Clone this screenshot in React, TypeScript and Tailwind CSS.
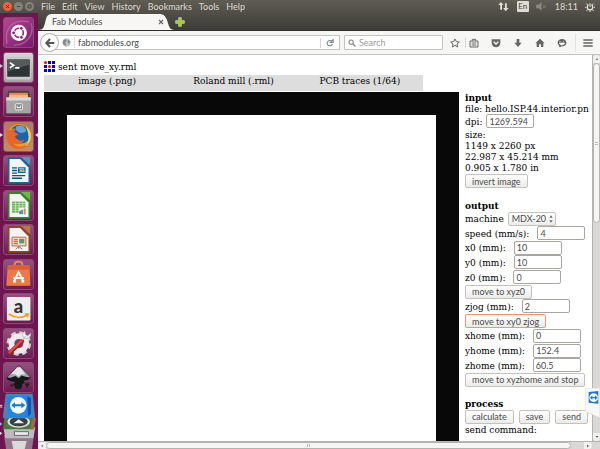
import type { ReactNode } from "react";

const MENUS = ["File", "Edit", "View", "History", "Bookmarks", "Tools", "Help"];

const FORMATS = ["image (.png)", "Roland mill (.rml)", "PCB traces (1/64)"];

const btn =
  "h-[14px] rounded-[2px] border border-[#c4c1bd] bg-linear-to-b from-white to-[#ebebea] px-[6px] font-['Lato',sans-serif] text-[9px] leading-[11px] text-[#4c4c4c] whitespace-nowrap";

function Tile({ name, bg, children }: { name: string; bg?: string; children: ReactNode }) {
  return (
    <button
      aria-label={name}
      className={`h-[31px] w-[31px] shrink-0 rounded-[3px] border border-[#8d4a79] ${bg ?? "bg-linear-to-b from-[#92527d] to-[#6d1a51]"}`}
    >
      <svg viewBox="0 0 90 90" className="h-full w-full">{children}</svg>
    </button>
  );
}

function Doc({ color, fold, children }: { color: string; fold: string; children: ReactNode }) {
  return (
    <>
      <path d="M12 4H54L81 32V86H12Z" fill={color} />
      <path d="M17 9H50L76 36V81H17Z" fill="#f4f4f4" />
      <path d="M53 3H81V29Z" fill={fold} />
      {children}
    </>
  );
}

function Launcher() {
  return (
    <nav className="flex w-[38px] shrink-0 flex-col items-center overflow-hidden bg-[#6f144f] pt-[4px] pr-px">
      <div className="relative flex h-[376px] shrink-0 flex-col justify-between">
        <Tile name="Dash" bg="bg-linear-to-br from-[#b04a8e] to-[#7d1770]">
          <path d="M10 80C-2 30 30 2 78 12M84 16C96 50 70 86 30 84" stroke="#c77db4" strokeWidth="4" fill="none" opacity=".6" />
          <circle cx="46" cy="46" r="25" fill="#fff" />
          <circle cx="46" cy="46" r="14" stroke="#8b2570" strokeWidth="5" fill="none" />
          <path d="M46 46L31 46M46 46L55 31M46 46L55 61" stroke="#fff" strokeWidth="3" />
          <g fill="#8b2570" stroke="#fff" strokeWidth="3">
            <circle cx="30" cy="46" r="6" />
            <circle cx="54" cy="32" r="6" />
            <circle cx="54" cy="60" r="6" />
          </g>
        </Tile>
        <Tile name="Terminal" bg="bg-linear-to-b from-[#d8d5d6] to-[#a99fa6]">
          <rect x="6" y="12" width="78" height="70" rx="5" fill="#c9c9c9" />
          <rect x="10" y="20" width="70" height="54" rx="2" fill="#2e3436" />
          <path d="M10 20H80V36L10 58Z" fill="#555a5b" />
          <path d="M18 30L30 38L18 46M35 46H48" stroke="#fff" strokeWidth="5" fill="none" />
        </Tile>
        <Tile name="Files">
          <path d="M14 12H76L82 36H8Z" fill="#4a403c" />
          <path d="M16 18H74V38H16Z" fill="#e88c50" />
          <path d="M16 25H74V38H16Z" fill="#f3bb91" />
          <path d="M7 32H83V82H7Z" fill="#a5a5a3" />
          <path d="M7 32H83V42H7Z" fill="#d8d8d6" />
          <rect x="35" y="52" width="22" height="19" rx="3" fill="#858583" stroke="#eee" strokeWidth="3" />
          <path d="M41 58V64H51V58" stroke="#fff" strokeWidth="3" fill="none" />
        </Tile>
        <Tile name="Firefox" bg="bg-linear-to-b from-[#b4795c] to-[#c18f62]">
          <circle cx="47" cy="44" r="37" fill="#f39a24" />
          <path d="M23 24C34 0 79 6 80 43C80 58 67 68 49 67C30 65 22 48 23 24Z" fill="#1e62a8" />
          <path d="M37 15C50 6 67 13 69 28C58 38 44 34 37 24Z" fill="#5ba9dc" />
          <path d="M9 20C13 25 18 27 24 22C27 20 34 20 37 22L31 31L46 39L34 44C42 57 53 62 63 54C57 70 39 72 29 65C38 82 68 81 80 60C76 88 22 94 10 58C6 42 8 30 9 20Z" fill="#e7652b" />
          <path d="M67 13C88 24 90 60 66 77C80 57 79 39 67 13Z" fill="#ffd449" />
        </Tile>
        <Tile name="Writer">
          <Doc color="#1b6390" fold="#5796bf">
            <path d="M25 37H40M25 45H40M25 53H40M25 61H66M25 69H56" stroke="#12537e" strokeWidth="4" />
            <rect x="43" y="35" width="24" height="18" fill="#176294" />
            <path d="M46 49L53 42L58 46L62 42L65 50Z" fill="#e9bd51" />
            <rect x="46" y="38" width="17" height="4" fill="#a0ceea" />
          </Doc>
        </Tile>
        <Tile name="Calc">
          <Doc color="#298b19" fold="#63bd43">
            <rect x="25" y="33" width="41" height="34" fill="#64ad4a" />
            <path d="M25 39H66M25 46H66M25 53H66M25 60H66M36 33V67M47 33V67M58 33V67" stroke="#e6f5df" strokeWidth="2" />
            <rect x="46" y="52" width="24" height="23" fill="#fff" />
            <path d="M50 72V61M56 72V58" stroke="#3279b6" strokeWidth="5" />
            <path d="M64 73V54" stroke="#e7833c" strokeWidth="6" />
          </Doc>
        </Tile>
        <Tile name="Impress">
          <Doc color="#8c451f" fold="#b77645">
            <path d="M25 38H68V65H25Z" fill="#fae1cb" stroke="#b86239" strokeWidth="3" />
            <path d="M30 46H43M30 52H43M30 58H43" stroke="#a84c24" strokeWidth="3" />
            <rect x="47" y="43" width="16" height="14" fill="#5c9774" />
            <path d="M46 66V74M36 75L46 67L57 75" stroke="#777" strokeWidth="3" fill="none" />
          </Doc>
        </Tile>
        <Tile name="Software">
          <path d="M33 24V15Q33 5 45 5Q57 5 57 15V24" stroke="#e98d67" strokeWidth="6" fill="none" />
          <path d="M12 16H79L82 80H7Z" fill="#ed794b" />
          <path d="M12 16H79L80 30H11Z" fill="#db5e32" />
          <path d="M32 65L45 37L59 65M29 56H62M28 67H37M54 67H63" stroke="#fff" strokeWidth="6" fill="none" />
        </Tile>
        <Tile name="Amazon">
          <rect x="9" y="9" width="73" height="73" rx="3" fill="#ededed" />
          <text x="45" y="58" textAnchor="middle" fontFamily="Lato" fontWeight="900" fontSize="57" fill="#333">a</text>
          <path d="M15 62Q44 82 72 65M65 62L75 62L73 72" stroke="#f49b23" strokeWidth="5" fill="none" />
        </Tile>
        <Tile name="Settings">
          <circle cx="46" cy="45" r="33" stroke="#d4d2d3" strokeWidth="10" strokeDasharray="15 11" fill="none" />
          <circle cx="46" cy="45" r="23" stroke="#ececec" strokeWidth="18" fill="none" />
          <path d="M56 38L18 74" stroke="#a32320" strokeWidth="13" strokeLinecap="round" />
          <path d="M54 37L17 72" stroke="#e14c43" strokeWidth="7" strokeLinecap="round" />
          <path d="M56 34L68 22M65 8C53 12 57 31 70 30C79 29 84 21 82 14L73 22L66 17Z" fill="#f7f7f7" stroke="#bcbcbc" strokeWidth="3" />
        </Tile>
        <Tile name="Inkscape">
          <path d="M8 46L40 11Q46 5 52 11L84 46Q75 56 60 54L65 62Q52 65 57 71Q51 85 43 81Q29 79 34 71Q21 68 36 60L17 55Q8 52 8 46Z" fill="#161616" />
          <path d="M10 45L41 12Q46 8 51 12L82 45L66 43L55 39L46 47L35 40L21 46Z" fill="#9da3aa" />
          <path d="M41 14L22 34L35 35L45 43L53 35L66 36L51 14Z" fill="#e4e6e8" />
          <path d="M20 70H27M66 66H79M69 73H75" stroke="#1b1b1b" strokeWidth="6" />
        </Tile>
        <span className="absolute top-[47px] -left-[3px] border-y-2 border-l-3 border-y-transparent border-l-[#d9c5d1]" />
        <span className="absolute top-[116px] -left-[3px] border-y-2 border-l-3 border-y-transparent border-l-[#ead8e2]" />
        <span className="absolute top-[116px] -right-[4px] border-y-2 border-r-3 border-y-transparent border-r-[#ead8e2]" />
      </div>
      <svg viewBox="0 0 114 168" className="h-[56px] w-[38px] shrink-0" aria-label="Folded applications">
        <path d="M12 127H102L96 168H18Z" fill="#93758a" />
        <path d="M35 144H80L74 168H40Z" fill="#d9dada" />
        <path d="M10 103H106L100 136H16Z" fill="#bdbcbd" />
        <rect x="43" y="116" width="42" height="11" fill="#eee" stroke="#686868" strokeWidth="3" />
        <path d="M13 75H108L101 109H9Z" fill="#497a43" />
        <path d="M97 75H108L101 109H92Z" fill="#9e6b3f" />
        <ellipse cx="56" cy="86" rx="34" ry="18" fill="#ddd" />
        <ellipse cx="56" cy="86" rx="27" ry="14" fill="#383e39" />
        <path d="M40 91L56 79L73 91Z" fill="#eee" />
        <path d="M17 2H98L105 72Q105 76 100 76H13Q8 76 9 70Z" fill="#4b83b7" />
        <path d="M22 9H82L93 62L84 72H25Z" fill="#1f86e4" />
        <path d="M82 9L93 16V62L84 72Z" fill="#0b58b4" />
        <circle cx="55" cy="37" r="25" fill="#f4f8fc" />
        <path d="M34 37L45 28V34H64V28L76 37L64 46V40H45V46Z" fill="#1976d2" />
        <path d="M0 37H7M0 42H7" stroke="#e5d3de" strokeWidth="3" />
        <path d="M0 88L7 93L0 98Z" fill="#8cbce3" />
        <path d="M0 116L7 121L0 126Z" fill="#ddd" />
      </svg>
    </nav>
  );
}

function TopBar() {
  return (
    <header className="flex h-[13px] shrink-0 items-center bg-linear-to-b from-[#605d54] to-[#504e47] text-[9px] leading-[13px] text-[#dfdbd2]">
      <div className="flex w-[41px] shrink-0 items-center gap-[2px] pl-[3px]">
        <button aria-label="Close" className="flex size-[9px] items-center justify-center rounded-full bg-[#ef6238]">
          <svg viewBox="0 0 9 9" className="size-[9px]"><path d="M3 3L6 6M6 3L3 6" stroke="#643221" /></svg>
        </button>
        <button aria-label="Minimize" className="flex size-[9px] items-center justify-center rounded-full bg-[#85827a]">
          <svg viewBox="0 0 9 9" className="size-[9px]"><path d="M3 4.5H6" stroke="#45433d" /></svg>
        </button>
        <button aria-label="Maximize" className="flex size-[9px] items-center justify-center rounded-full bg-[#85827a]">
          <svg viewBox="0 0 9 9" className="size-[9px]"><path d="M3 3H6V6H3Z" stroke="#45433d" fill="none" /></svg>
        </button>
      </div>
      <div className="flex flex-1 gap-[7px]">
        {MENUS.map((m) => <button key={m}>{m}</button>)}
      </div>
      <div className="flex items-center gap-[7px] pr-[5px]">
        <svg viewBox="0 0 30 30" className="mr-px size-[11px]" fill="#e4e0d7">
          <path d="M8 3L15 11H11V24H6V11H1Z" />
          <path d="M19 6H24V19H29L21 28L14 19H19Z" />
        </svg>
        <span className="flex h-[11px] w-[12px] items-center justify-center rounded-[1px] bg-[#dfdbd2] text-[8px] text-[#45433d]">En</span>
        <svg viewBox="0 0 30 24" className="h-[9px] w-[11px]">
          <path d="M1 8H7L14 2V22L7 16H1ZM19 8L27 17M27 8L19 17" fill="#8b887f" stroke="#8b887f" strokeWidth="2" />
        </svg>
        <span className="ml-px">18:11</span>
        <svg viewBox="0 0 30 30" className="size-[10px]" stroke="#e4e0d7" fill="none">
          <circle cx="15" cy="16" r="8" strokeWidth="4" />
          <path d="M15 1V15" stroke="#57544c" strokeWidth="8" />
          <path d="M15 3V15M4 5L8 9M26 5L22 9M0 16H4M26 16H30M4 27L8 23M26 27L22 23M15 26V30" strokeWidth="3" />
        </svg>
      </div>
    </header>
  );
}

function TabStrip() {
  return (
    <div className="flex h-[18px] shrink-0 items-end border-b border-[#2d2c28] bg-linear-to-b from-[#504e47] to-[#3c3b37]">
      <div className="relative flex h-[17px] w-[137px] items-center">
        <svg viewBox="0 0 137 17" className="absolute inset-0 h-full w-full">
          <path d="M0 17C7 17 6 12 8 6C9 2 11 1 15 1H121C126 1 127 3 129 7C131 13 131 17 137 17Z" fill="#f7f6f5" />
        </svg>
        <span className="relative flex-1 pt-px pl-[14px] text-[9px] text-[#4c4c4c]">Fab Modules</span>
        <button aria-label="Close tab" className="relative mr-[11px]">
          <svg viewBox="0 0 6 6" className="size-[6px]"><path d="M1 1L5 5M5 1L1 5" stroke="#666" strokeWidth="1.2" /></svg>
        </button>
      </div>
      <button aria-label="New tab" className="mb-[3px]">
        <svg viewBox="0 0 30 30" className="size-[10px]"><path d="M11 2H19V11H28V19H19V28H11V19H2V11H11Z" fill="#a2c93a" stroke="#d6e8a6" strokeWidth="2" /></svg>
      </button>
    </div>
  );
}

function ToolIcon({ name, children }: { name: string; children: ReactNode }) {
  return (
    <button aria-label={name} className="shrink-0">
      <svg viewBox="0 0 30 30" className="size-[10px]" fill="#666" stroke="#666">{children}</svg>
    </button>
  );
}

function Toolbar() {
  return (
    <div className="flex h-[24px] shrink-0 items-center border-b border-[#c6c4c0] bg-[#f6f6f5] pr-[7px] pl-[2px] text-[9px]">
      <button aria-label="Back" className="z-10 -mr-[6px] flex size-[19px] shrink-0 items-center justify-center rounded-full border border-[#b0afad] bg-[#fafafa]">
        <svg viewBox="0 0 30 30" className="size-[10px]"><path d="M15 3L4 15L15 27M5 15H28" stroke="#555" strokeWidth="6" fill="none" /></svg>
      </button>
      <div className="flex h-[15px] min-w-0 flex-1 items-center border border-[#c4c3c1] bg-white pl-[8px]">
        <svg viewBox="0 0 30 30" className="mr-[3px] size-[9px] shrink-0">
          <circle cx="15" cy="15" r="14" fill="#c0c2c4" />
          <path d="M4 8L13 3L16 9L10 15L14 21L10 26L3 18ZM20 5L27 11L25 20L19 17Z" fill="#83878b" />
        </svg>
        <input aria-label="Address" defaultValue="fabmodules.org" className="h-[11px] min-w-0 flex-1 border-l border-[#dededd] pl-[3px] text-[9px] text-[#4a4a4a] outline-none" />
        <button aria-label="Reload" className="flex h-[10px] w-[19px] items-center justify-center border-l border-[#d5d5d4]">
          <svg viewBox="0 0 30 30" className="size-[8px]"><path d="M24 18A10 10 0 1 1 21 8M27 2V13H16Z" stroke="#78838e" strokeWidth="4" fill="none" /></svg>
        </button>
      </div>
      <div className="ml-[4px] flex h-[15px] w-[99px] shrink-0 items-center gap-[3px] rounded-[1px] border border-[#c4c3c1] bg-white pl-[3px]">
        <svg viewBox="0 0 30 30" className="size-[8px] shrink-0"><circle cx="12" cy="12" r="8" stroke="#888" strokeWidth="4" fill="none" /><path d="M18 18L28 28" stroke="#888" strokeWidth="5" /></svg>
        <input aria-label="Search" placeholder="Search" className="min-w-0 flex-1 outline-none placeholder:text-[#999]" />
      </div>
      <div className="flex items-center px-[5px] pl-[7px]">
        <ToolIcon name="Bookmark">
          <path d="M15 3L19 11L28 12L21 18L23 27L15 22L7 27L9 18L2 12L11 11Z" fill="none" strokeWidth="3" />
        </ToolIcon>
      </div>
      <div className="flex items-center gap-[12px] border-l border-[#d5d5d4] pr-[8px] pl-[3px]">
        <ToolIcon name="Library">
          <path d="M3 9H27V27H3Z" fill="none" strokeWidth="3" />
          <path d="M10 8V4H20V8M8 15H22M8 21H22" fill="none" strokeWidth="3" />
        </ToolIcon>
        <ToolIcon name="Pocket">
          <path d="M2 4H28V15C28 32 2 32 2 15Z" stroke="none" />
          <path d="M8 11L15 18L22 11" fill="none" stroke="#f6f6f5" strokeWidth="4" />
        </ToolIcon>
        <ToolIcon name="Downloads"><path d="M11 3H19V14H26L15 27L4 14H11Z" stroke="none" /></ToolIcon>
        <ToolIcon name="Home"><path d="M15 2L29 16H25V27H18V19H12V27H5V16H1Z" stroke="none" /></ToolIcon>
        <ToolIcon name="Chat">
          <path d="M15 3C32 3 33 24 17 25L6 28L7 23C-3 17 2 3 15 3Z" stroke="none" />
          <path d="M7 15C9 23 21 23 23 15ZM9 9V12M20 9V12" fill="#f6f6f5" stroke="#f6f6f5" strokeWidth="2" />
        </ToolIcon>
      </div>
      <div className="flex h-[18px] items-center border-l border-[#e3e3e2] pl-[7px]">
        <ToolIcon name="Menu"><path d="M1 6H29M1 15H29M1 24H29" strokeWidth="4" /></ToolIcon>
      </div>
    </div>
  );
}

function Field({ id, label, value, tight }: { id: string; label: string; value: string; tight?: boolean }) {
  return (
    <div className={`flex items-center ${tight ? "gap-[4px]" : "gap-[8px]"}`}>
      <label htmlFor={id} className="whitespace-nowrap">{label}</label>
      <input
        id={id}
        defaultValue={value}
        className="h-[14px] w-[48px] shrink-0 rounded-[2px] border border-[#aaa7a3] bg-white px-[2px] font-['Lato',sans-serif] text-[9px] text-[#4c4c4c]"
      />
    </div>
  );
}

function Settings() {
  return (
    <form className="w-[127px] shrink-0 whitespace-nowrap">
      <h2 className="font-bold">input</h2>
      <p>file: hello.ISP.44.interior.pn</p>
      <div className="h-[15px]"><Field id="dpi" label="dpi:" value="1269.594" tight /></div>
      <p>size:</p>
      <p>1149 x 2260 px</p>
      <p>22.987 x 45.214 mm</p>
      <p>0.905 x 1.780 in</p>
      <button type="button" className={`${btn} mt-px`}>invert image</button>

      <h2 className="mt-[12px] font-bold">output</h2>
      <div className="flex h-[15px] items-center gap-[4px]">
        <label htmlFor="machine">machine</label>
        <div className="relative">
          <select id="machine" className="block h-[14px] w-[48px] appearance-none rounded-[2px] border border-[#c4c1bd] bg-linear-to-b from-white to-[#ebebea] pl-[3px] font-['Lato',sans-serif] text-[9px] leading-[11px] text-[#4c4c4c]">
            <option>MDX-20</option>
          </select>
          <svg viewBox="0 0 12 24" className="pointer-events-none absolute top-[3px] right-[3px] h-[8px] w-[4px]" fill="#666">
            <path d="M6 1L11 8H1ZM6 23L1 16H11Z" />
          </svg>
        </div>
      </div>
      <div className="flex h-[161px] flex-col items-start justify-between">
        <Field id="speed" label="speed (mm/s):" value="4" />
        <Field id="x0" label="x0 (mm):" value="10" />
        <Field id="y0" label="y0 (mm):" value="10" />
        <Field id="z0" label="z0 (mm):" value="0" />
        <button type="button" className={btn}>move to xyz0</button>
        <Field id="zjog" label="zjog (mm):" value="2" />
        <button type="button" className={`${btn} border-[#ec9473]`}>move to xy0 zjog</button>
        <Field id="xhome" label="xhome (mm):" value="0" />
        <Field id="yhome" label="yhome (mm):" value="152.4" />
        <Field id="zhome" label="zhome (mm):" value="60.5" />
        <button type="button" className={btn}>move to xyzhome and stop</button>
      </div>

      <h2 className="mt-[11px] font-bold">process</h2>
      <div className="flex h-[15px] items-center gap-[5px]">
        <button type="button" className={btn}>calculate</button>
        <button type="button" className={btn}>save</button>
        <button type="button" className={btn}>send</button>
      </div>
      <p>send command:</p>
    </form>
  );
}

function Page() {
  return (
    <main className="flex min-w-0 flex-1 flex-col overflow-hidden bg-white pt-[6px] pl-[6px] font-['DejaVu_Serif_Condensed','DejaVu_Serif',serif] text-[10px] leading-[11px] text-black">
      <div className="flex h-[14px] shrink-0 gap-[3px]">
        <svg viewBox="0 0 33 33" className="size-[11px]">
          <path d="M12 0H21V9H12ZM24 0H33V9H24ZM0 12H9V21H0ZM24 12H33V21H24ZM0 24H9V33H0ZM12 24H21V33H12ZM24 24H33V33H24Z" fill="#0000f0" />
          <circle cx="4.5" cy="4.5" r="4.5" fill="#f00" />
          <circle cx="16.5" cy="16.5" r="4.5" fill="#f00" />
        </svg>
        <h1>sent move_xy.rml</h1>
      </div>
      <div className="mr-[169px] grid h-[16px] shrink-0 grid-cols-3 bg-[#ddd] text-center">
        {FORMATS.map((f) => <button key={f} className="self-start">{f}</button>)}
      </div>
      <div className="mt-px flex min-h-0 flex-1 gap-[6px]">
        <div className="flex min-w-0 flex-1 bg-[#080808] px-[23px] pt-[23px]">
          <div className="flex-1 bg-white" />
        </div>
        <Settings />
      </div>
    </main>
  );
}

export default function App() {
  return (
    <div className="relative flex h-screen flex-col overflow-hidden bg-white font-['Lato',sans-serif]">
      <TopBar />
      <div className="flex min-h-0 flex-1">
        <Launcher />
        <div className="flex min-w-0 flex-1 flex-col">
          <TabStrip />
          <Toolbar />
          <div className="flex min-h-0 flex-1">
            <Page />
            <div className="flex w-[8px] shrink-0 flex-col items-center border-l border-[#b5b3b0] bg-[#d9d8d6]">
              <span className="flex h-[8px] w-full items-center justify-center rounded-t-[4px] bg-[#f1f1f0]">
                <svg viewBox="0 0 6 4" className="h-[2px] w-[4px]"><path d="M0 4L3 0L6 4Z" fill="#888" /></svg>
              </span>
              <span className="flex h-[160px] w-full flex-col items-center justify-center gap-px rounded-[4px] border border-[#b5b3b0] bg-[#f5f5f4]">
                <i className="h-px w-[3px] bg-[#bbb]" />
                <i className="h-px w-[3px] bg-[#bbb]" />
              </span>
              <span className="flex-1" />
              <span className="flex h-[8px] w-full items-center justify-center rounded-b-[4px] bg-[#f1f1f0]">
                <svg viewBox="0 0 6 4" className="h-[2px] w-[4px]"><path d="M0 0L3 4L6 0Z" fill="#666" /></svg>
              </span>
            </div>
          </div>
          <div className="flex h-[8px] shrink-0 items-center border-t border-[#b5b3b0] bg-[#d9d8d6] pr-[8px]">
            <span className="flex h-full w-[8px] items-center justify-center rounded-l-[4px] bg-[#f1f1f0]">
              <svg viewBox="0 0 4 6" className="h-[4px] w-[2px]"><path d="M4 0L0 3L4 6Z" fill="#888" /></svg>
            </span>
            <span className="flex h-full flex-1 items-center justify-center gap-px rounded-[4px] border border-[#b5b3b0] bg-[#f5f5f4]">
              <i className="h-[3px] w-px bg-[#bbb]" />
              <i className="h-[3px] w-px bg-[#bbb]" />
            </span>
            <span className="w-[13px]" />
            <span className="flex h-full w-[8px] items-center justify-center rounded-r-[4px] bg-[#f1f1f0]">
              <svg viewBox="0 0 4 6" className="h-[4px] w-[2px]"><path d="M0 0L4 3L0 6Z" fill="#666" /></svg>
            </span>
          </div>
        </div>
      </div>
      <svg viewBox="0 0 45 90" className="absolute right-0 bottom-[31px] h-[30px] w-[15px]">
        <path d="M0 5Q0 0 5 0H45V90L0 70Z" fill="#f8f8f8" stroke="#d5d5d5" strokeWidth="2" />
        <path d="M11 12L40 9V47L11 44Z" fill="#1976dc" />
        <circle cx="26" cy="29" r="13" fill="#fff" />
        <path d="M15 29L22 22V27H30V22L38 29L30 36V31H22V36Z" fill="#1976dc" />
      </svg>
    </div>
  );
}
